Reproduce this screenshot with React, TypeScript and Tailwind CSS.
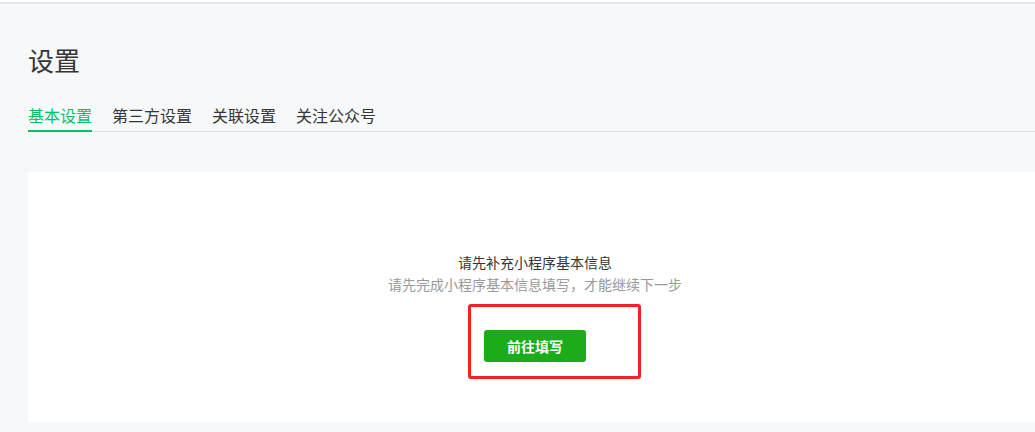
import React from 'react';

const font = { fontFamily: '"Noto Sans CJK SC", "Liberation Sans", sans-serif' };

const tabs = ['基本设置', '第三方设置', '关联设置', '关注公众号'];

const App = () => {
  return (
    <div className="w-[1035px] h-[432px] overflow-hidden bg-[#f7f8fa] relative" style={font}>
      <div className="h-[2px] bg-white" />
      <div className="h-[2px] bg-[#e7e8ea]" />

      <div className="pl-[28px]">
        <h1 className="mt-[38px] text-[26px] leading-[36px] text-[#353535] font-normal">设置</h1>

        <div className="mt-[26px] flex border-b border-[#e1e3e6]">
          {tabs.map((t, i) => (
            <div
              key={t}
              className={
                i === 0
                  ? 'mr-[20px] pb-[3px] text-[16px] leading-[22px] text-[#07c160] border-b-2 border-[#07c160] -mb-px'
                  : 'mr-[20px] pb-[5px] text-[16px] leading-[22px] text-[#353535]'
              }
            >
              {t}
            </div>
          ))}
        </div>

        <div className="mt-[40px] w-[1014px] h-[250px] bg-white flex flex-col items-center pt-[79px]">
          <p className="text-[14px] leading-[22px] text-[#353535]">请先补充小程序基本信息</p>
          <p className="text-[14px] leading-[22px] text-[#9a9a9a]">请先完成小程序基本信息填写，才能继续下一步</p>
          <div className="relative mt-[35px]">
            <button className="w-[102px] h-[32px] rounded-[3px] bg-[#1aad19] text-white text-[14px] font-bold">
              前往填写
            </button>
            <div className="absolute left-[-16px] top-[-26px] w-[173px] h-[75px] border-[3px] border-[#f52222] rounded-[3px]" />
          </div>
        </div>
      </div>
    </div>
  );
};

export default App;
